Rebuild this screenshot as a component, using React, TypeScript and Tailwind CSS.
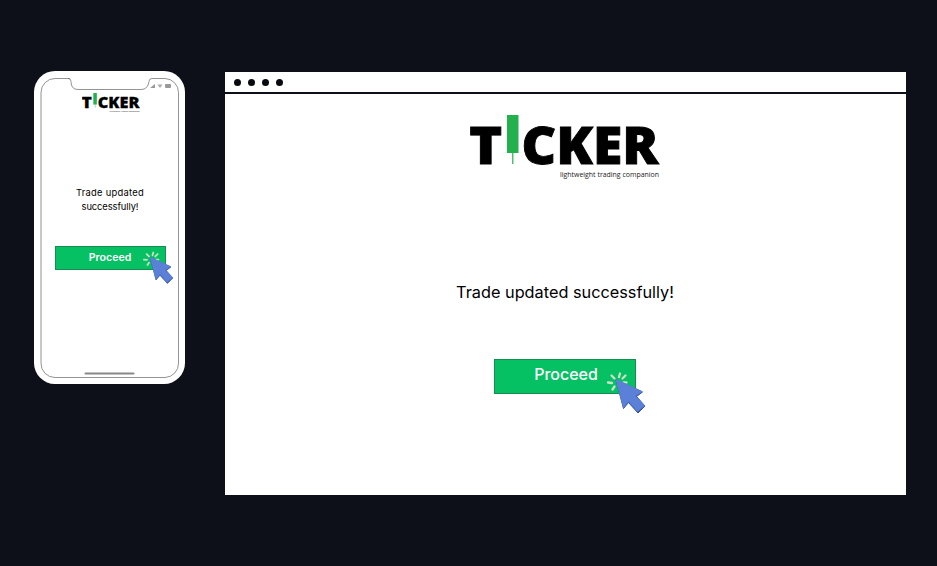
import React from "react";

function Logo({ className }: { className: string }) {
  return (
    <svg viewBox="0 0 190 64" className={className} aria-label="Ticker">
      <g fontFamily="'Open Sans', sans-serif" fontWeight="800" fontSize="52" fill="#000" stroke="#000" strokeWidth="0.9">
        <text x="-0.8" y="48.600" textLength="33" lengthAdjust="spacingAndGlyphs">T</text>
        <text x="51.500" y="48.600" textLength="137" lengthAdjust="spacingAndGlyphs">CKER</text>
      </g>
      <rect x="37" y="0" width="11.5" height="38" fill="#22b14c" />
      <rect x="42.2" y="38" width="1.2" height="11" fill="#22b14c" />
      <text x="90" y="62" textLength="99" lengthAdjust="spacingAndGlyphs" fontFamily="'Open Sans', sans-serif" fontSize="7.2" fill="#222">
        lightweight trading companion
      </text>
    </svg>
  );
}

function ClickCursor({ className }: { className: string }) {
  return (
    <svg viewBox="0 0 46 48" className={className} aria-hidden="true">
      <g stroke="#c9e3c4" strokeWidth="2.300" strokeLinecap="round">
        <path d="M17 5.500l-1 3.500M22.500 7.500l-3 3M8.500 7.500l3 3M5 14.500l4 .5M11.500 18.500l-2 3M20.500 14.500h3" />
      </g>
      <path d="M13 12L39.500 24 33.500 28.500 42 38 35 45 25.500 34.500 20.500 40.500Z" fill="#34539f" stroke="#34539f" strokeLinejoin="round" />
      <path d="M13 11.500L39 23.500 32 28 41.500 37.500 34.500 43.500 25.500 33 20.500 39.500Z" fill="#5b80d8" stroke="#5b80d8" strokeLinejoin="round" />
    </svg>
  );
}

function Phone() {
  return (
    <section className="relative mt-[71px] ml-[34px] flex h-[313px] w-[151px] shrink-0 flex-col items-center rounded-[21px] bg-white pl-px">
      <svg viewBox="0 0 151 313" className="absolute inset-0 h-full w-full" fill="none">
        <path d="M36 7.500H21A14 14 0 0 0 7 21.500V292A14 14 0 0 0 21 306.500H131A14 14 0 0 0 144.500 292V21.500A14 14 0 0 0 131 7.500H118Q115 7.500 115 10.500Q114 18.500 107 18.500H44Q37 18.500 37 10.500Q37 7.500 34 7.500" stroke="#777" strokeWidth="0.8" />
        <path d="M51.500 302.500h48" stroke="#888" strokeWidth="2" strokeLinecap="round" />
        <path d="M116 17l5-4v4z" fill="#999" />
        <path d="M123.500 13.500h5l-2.500 3.500z" fill="#aaa" />
        <rect x="131" y="13" width="6" height="4" rx="1" fill="#999" />
      </svg>
      <Logo className="mt-[22px] ml-[2px] h-[19.500px] w-[58px]" />
      <p className="mt-[73.500px] text-center font-[Inter,sans-serif] text-[9.400px] leading-[14px] text-black">
        <span className="tracking-[0.25px]">Trade updated</span>
        <br />
        <span className="tracking-[-0.1px]">successfully!</span>
      </p>
      <button className="relative mt-[32px] h-[24px] w-[111px] border border-[#168c50] bg-[#05c164] font-[Inter,sans-serif] text-[10.600px] leading-[20px] font-semibold text-white">
        Proceed
        <ClickCursor className="absolute top-[1px] left-[84px] h-[38px] w-[36px]" />
      </button>
    </section>
  );
}

function Browser() {
  return (
    <section className="mt-[72px] ml-[39.500px] flex h-[423px] w-[681px] shrink-0 flex-col bg-white">
      <header className="flex h-[22px] shrink-0 items-center gap-[7px] border-b-2 border-[#0c0f18] pl-[9.500px]">
        <i className="h-[7px] w-[7px] rounded-full bg-[#080a10]" />
        <i className="h-[7px] w-[7px] rounded-full bg-[#080a10]" />
        <i className="h-[7px] w-[7px] rounded-full bg-[#080a10]" />
        <i className="h-[7px] w-[7px] rounded-full bg-[#080a10]" />
      </header>
      <main className="flex flex-col items-center pr-px">
        <Logo className="mt-[21px] h-[64px] w-[190px]" />
        <p className="mt-[101px] pl-px font-[Inter,sans-serif] text-[16.300px] leading-[24px] text-black">
          Trade updated successfully!
        </p>
        <button className="relative mt-[55px] h-[35px] w-[142px] border border-[#168c50] bg-[#05c164] pl-px font-[Inter,sans-serif] text-[16px] leading-[27px] font-medium text-white">
          <span className="relative -top-[2px] left-px">Proceed</span>
          <ClickCursor className="absolute top-[8px] left-[108px] h-[48px] w-[46px]" />
        </button>
      </main>
    </section>
  );
}

export default function App() {
  return (
    <div className="flex h-[566px] w-[937px] items-start overflow-hidden bg-[#0d1018]">
      <Phone />
      <Browser />
    </div>
  );
}
